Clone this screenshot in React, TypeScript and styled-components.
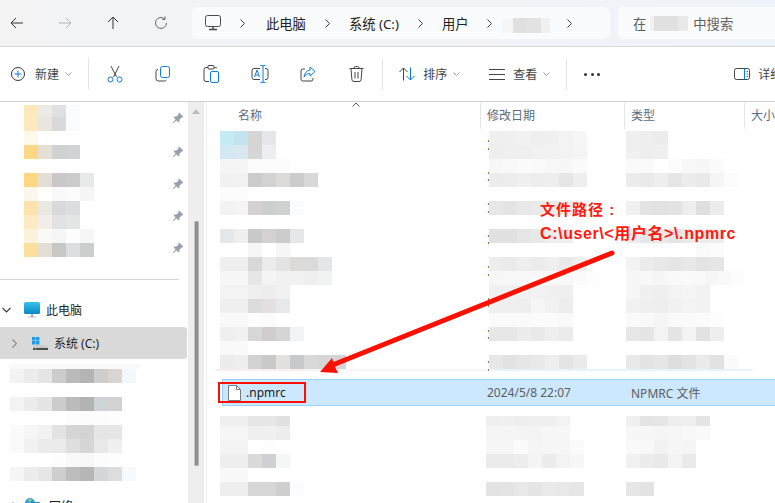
import styled, { createGlobalStyle } from 'styled-components'

const GlobalStyle = createGlobalStyle`
  html, body {
    margin: 0;
    padding: 0;
    background: #fff;
  }

  body {
    font-family: "Noto Sans", "Noto Sans CJK SC", sans-serif;
    font-size: 12px;
    color: #1f1f1f;
  }
`

// 马赛克数据: 两位是灰度, 六位是彩色, -- 是透明
const sideQuick = [
  'FDE9B9 ECEAE4 E0 FBFCFF',
  'FDE9BB E8E6DF D9 FBFCFF',
  'FFF9EC',
  'FDD884 E5E0D4 D1 D1D2D3',
  '',
  'FDD880 E4DFD5 C9C8C6 CB E8EAEA',
  'FCF7EC FF F9 FC F5',
  'FDE3AB E9E8E2 D9 DCDDDF',
  'FCEBC3 F0EEE7 E2 E3E4E4',
  'FCF1D9 F9F9F7 F6 FD F6',
  'FDDF9C E3DFD7 C8C7C5 DDDEE0 CCCDCD',
]

const sideDrives = [
  'F3 EC E5 CC BA B4 CE D8D5D3 F5F8FA',
  '',
  'F3 EC E5 CC BB B3 CED3D6 D2',
  '-- -- -- -- FD FC FC FD',
  'FA F6 F2 E3 D5 D3 E6 E6',
  'FA F1 EB EB DE D6 E8 F0',
  '-- -- -- FD F9 F8 FC FD',
  'F5 EC E6 CE BD B6 D4D6D8 DD F8F9FC',
]

const nameUpper = [
  'C3ECF5 C3E3EF D6 E6E7E9',
  'D2E8F3 D9E8F0 D6 EDEEF0',
  'F5 F5 FC FC FC FE',
  'F1 F2 CB D3 DCDBD9 CB D8',
  'FC FC',
  'F2 F5 D3D2D0 CCCFCE D0D2D1 FAFBFC',
  '',
  'E6E7E9 EF C9 D4D2D0 CC E6E7E9',
  '-- -- F6 -- F6',
  'EF EF D8 EB E3 DCDAD8 DA E5E6E8',
  'F6 F6 E6 F4 F1 F1 EF F1F3F3',
  'F3 F3 EF ED F1',
  'F0 F0 DC E2E0E0 E7E8E9',
  'F9 F9 FD FB',
  'EF F1 D7 CFCDCD D5 F2F3F5',
  'F9 F9',
  'EC EE D2 C9 E2E1DF C8C9CB D9 D6 D4',
]

const dateUpper = [
  'EF F0 F1 EF F0 F3 F6',
  'EE EF EF F1 F2 F3 F5',
  'F7 F9 FB FA F8 F7 FB',
  'EC ED EF ED EE E6 EE',
  '',
  'E7 E4 E9 EA EC ED F0',
  '',
  'E1 E1 E6 E8 EE EE',
  '',
  'ED EA EE EB EF E9 EE',
  'F7 F8 F8 F9 F8 F8 FB FD',
  'F1 F1 F1 F2 F0 EF',
  'EF EF EE F6 F1 ED FE',
  'FA FA FA FB FB F9',
  'E7 E7 EC E9 EF EB',
  '',
  'E7 E2 E6 E8 EE E4 EA',
]

const typeUpper = [
  'F0 EE EC',
  'F0 EE EF',
  'FA FA FF FC F8 F7 FB',
  'EC EA EE E6 EC E9 F5 FC',
  '',
  'F0 E4 E2 E3 EE DF EC',
  '',
  'EC E7 E9 E5 EA EC EE',
  '-- -- -- -- -- FA FC',
  'F3 EC E8 E5 E8 E4 E6',
  'F7 F8 F5 F9 FA F9 F6 F9 FC',
  'F7 F0 EF F3 F5 F2',
  'F1 EF EE F1 F3 F2',
  'FA F9 F5 FA FA FB FD',
  'E7 E5 F3 E5 F3 E2 EE',
  '',
  'E9 E3 E6 DE E3 EA E2 FA',
]

const nameLower = [
  'F0 F0 E6 E6 E1',
  'F6 F6 EF F0 ED',
  'F3 F3 FF FD',
  'EE EE DA D0D0D3 F5F7F6',
  'F8 F8',
  'EE EE D7 D7 CF FCFCFE',
]

const dateLower = [
  'EF F0 EE EF EF F3',
  'F5 F5 F4 F3 F6 F7',
  'F7 F7 FB F5 F7 F6 FB',
  'EB EB ED F4 EC F3 F7',
  '',
  'E3 E4 E8 E5 EA E8 E6',
]

const typeLower = [
  'EF E4 E6 EE EF E5',
  'F7 F7 F5 F6 F8 F9',
  'F9 F8 F2 F6 F5',
  'F1 EC E9 F3 EA',
  '',
  'E6 E3',
]

const toColor = (token: string) => {
  if (token === '--') return 'transparent'
  return token.length === 2 ? `#${token}${token}${token}` : `#${token}`
}

const Mosaic = ({ rows, topRow = 14 }: { rows: string[]; topRow?: number }) => (
  <MosaicGrid>
    {rows.map((row, r) => (
      <MosaicRow key={r} style={{ height: r === 0 ? topRow : 14 }}>
        {row
          .split(' ')
          .filter(Boolean)
          .map((token, c) => (
            <MosaicCell key={c} style={{ background: toColor(token) }} />
          ))}
      </MosaicRow>
    ))}
  </MosaicGrid>
)

const Chevron = () => (
  <svg width="5" height="9" viewBox="0 0 5 9" fill="none" stroke="#3a3a3a" strokeWidth="1">
    <path d="M.5.5l4 4-4 4" />
  </svg>
)

const SmallDown = () => (
  <svg width="7" height="4" viewBox="0 0 7 4" fill="none" stroke="#9a9a9a" strokeWidth="1">
    <path d="M.5.5l3 3 3-3" />
  </svg>
)

const BLUE = '#0f7ad8'
const INK = '#444'

const Pin = () => (
  <svg width="12" height="12" viewBox="0 0 12 12" fill="#97a1ab">
    <path d="M7.2.6l4.2 4.2-1 .8-.8-.2-2.2 2.3.1 1.9-.9.8-2-2L1 11.500.6 11l3-3.600-2-2 .8-.9 1.900.1L6.600 2.400l-.2-.8z" />
  </svg>
)

export default function App() {
  return (
    <Page>
      <GlobalStyle />
      <TopBar>
        <NavIcons>
          <svg width="16" height="16" viewBox="0 0 16 16" fill="none" stroke="#333">
            <path d="M14 8H2.500M7 3L2 8l5 5" />
          </svg>
          <svg width="16" height="16" viewBox="0 0 16 16" fill="none" stroke="#b4b4b4">
            <path d="M2 8h11.500M9 3l5 5-5 5" />
          </svg>
          <svg width="16" height="16" viewBox="0 0 16 16" fill="none" stroke="#333">
            <path d="M8 14V2.500M3 7l5-5 5 5" />
          </svg>
          <svg width="16" height="16" viewBox="0 0 16 16" fill="none" stroke="#666">
            <path d="M13.500 8a5.500 5.500 0 1 1-1.800-4.100M12 1.500V4.400H9.100" />
          </svg>
        </NavIcons>
        <AddressBar>
          <svg width="16" height="16" viewBox="0 0 16 16" fill="none" stroke="#4a4a4a">
            <rect x=".5" y=".5" width="15" height="11" rx="2" />
            <path d="M8 12v2.500M4 14.500h8" strokeWidth="1.500" />
          </svg>
          <Chevron />
          <FirstCrumb>此电脑</FirstCrumb>
          <Chevron />
          <Crumb>系统 (C:)</Crumb>
          <Chevron />
          <Crumb>用户</Crumb>
          <Chevron />
          <BlurredFolder />
          <Chevron />
        </AddressBar>
        <SearchBox>
          <SearchText>在</SearchText>
          <BlurredScope />
          <SearchText>中搜索</SearchText>
        </SearchBox>
      </TopBar>

      <Toolbar>
        <NewButton>
          <svg width="14" height="14" viewBox="0 0 14 14" fill="none">
            <circle cx="7" cy="7" r="6.500" stroke="#333" />
            <path d="M7 3.500v7M3.500 7h7" stroke={BLUE} />
          </svg>
          <ToolLabel>新建</ToolLabel>
          <SmallDown />
        </NewButton>
        <ToolSep />
        <ClipboardGroup>
          <IconButton>
            <svg width="16" height="18" viewBox="0 0 16 18" fill="none" stroke={INK}>
              <path d="M4 1l5.500 11M12 1L6.500 12" />
              <circle cx="3.500" cy="14.500" r="2.500" stroke={BLUE} />
              <circle cx="12.500" cy="14.500" r="2.500" stroke={BLUE} />
            </svg>
          </IconButton>
          <IconButton>
            <svg width="16" height="16" viewBox="0 0 16 16" fill="none">
              <path d="M3 3.500A2 2 0 0 0 1 5.500v7A2.500 2.500 0 0 0 3.500 15h6a2 2 0 0 0 1.800-1.200" stroke={INK} />
              <rect x="5.500" y=".5" width="9" height="11" rx="2" stroke={BLUE} />
            </svg>
          </IconButton>
          <IconButton>
            <svg width="16" height="18" viewBox="0 0 16 18" fill="none">
              <path d="M5 2.500H3A2 2 0 0 0 1 4.500v10A2 2 0 0 0 3 16.500h3M11 2.500h1.500a2 2 0 0 1 1.500.8" stroke={INK} />
              <rect x="5" y=".5" width="6" height="3.500" rx="1" stroke={INK} />
              <rect x="7.500" y="6.500" width="8" height="11" rx="1.500" stroke={BLUE} />
            </svg>
          </IconButton>
          <IconButton>
            <svg width="18" height="18" viewBox="0 0 18 18" fill="none">
              <path d="M9 3.500H3A2 2 0 0 0 1 5.500v7a2 2 0 0 0 2 2h6M14 3.500h1A2 2 0 0 1 17 5.500v7a2 2 0 0 1-2 2h-1" stroke={INK} />
              <path d="M9.500.5h1.500a1 1 0 0 1 1 1v15a1 1 0 0 1-1 1H9.500M14.500.5H13a1 1 0 0 0-1 1M14.500 17.500H13a1 1 0 0 1-1-1" stroke={BLUE} />
              <path d="M3.500 12l2.500-7 2.500 7M4.400 10h3.200" stroke={BLUE} />
            </svg>
          </IconButton>
          <IconButton>
            <svg width="16" height="16" viewBox="0 0 16 16" fill="none">
              <path d="M5 3H3A2 2 0 0 0 1 5v8a2 2 0 0 0 2 2h8a2 2 0 0 0 2-2v-1" stroke={INK} />
              <path d="M10 1l5 4.500-5 4.500V7.500C7.500 7.500 5.500 8.500 4 11c.3-3.500 2.500-6.500 6-7z" stroke={BLUE} />
            </svg>
          </IconButton>
          <IconButton>
            <svg width="15" height="16" viewBox="0 0 15 16" fill="none" stroke={INK}>
              <path d="M.5 2.500h14M5 2.500V2a1.500 1.500 0 0 1 1.500-1.500h2A1.500 1.500 0 0 1 10 2v.5M2 2.500l.9 11A2 2 0 0 0 5 15.500h5a2 2 0 0 0 2.100-2l.9-11M6 6v6.500M9 6v6.500" />
            </svg>
          </IconButton>
        </ClipboardGroup>
        <ToolSep />
        <SortButton>
          <svg width="16" height="14" viewBox="0 0 16 14" fill="none">
            <path d="M4.500 13.500V1M.5 5l4-4 4 4" stroke={INK} />
            <path d="M11.500.5V13M7.500 9l4 4 4-4" stroke={BLUE} />
          </svg>
          <ToolLabel>排序</ToolLabel>
          <SmallDown />
        </SortButton>
        <ViewButton>
          <svg width="16" height="11" viewBox="0 0 16 11" fill="none" stroke={INK}>
            <path d="M0 .5h16M0 5.500h16M0 10.500h16" />
          </svg>
          <ToolLabel>查看</ToolLabel>
          <SmallDown />
        </ViewButton>
        <ToolSep />
        <MoreDots>
          <i />
          <i />
          <i />
        </MoreDots>
        <DetailsButton>
          <svg width="16" height="12" viewBox="0 0 16 12" fill="none">
            <rect x=".5" y=".5" width="15" height="11" rx="2" stroke={INK} />
            <path d="M10.500.5V11.500M12.500 3.500h1.500M12.500 6h1.500M12.500 8.500h1.500" stroke={BLUE} />
          </svg>
          <ToolLabel>详细信息</ToolLabel>
        </DetailsButton>
      </Toolbar>

      <Main>
        <Sidebar>
          <SideContent>
            <QuickAccess>
              <Mosaic rows={sideQuick} topRow={12} />
              <Pins>
                {[0, 1, 2, 3, 4].map(n => (
                  <Pin key={n} />
                ))}
              </Pins>
            </QuickAccess>
            <SideSep />
            <PcRow>
              <svg width="9" height="6" viewBox="0 0 9 6" fill="none" stroke="#333" strokeWidth="1.200">
                <path d="M.5.800l4 4 4-4" />
              </svg>
              <svg width="16" height="16" viewBox="0 0 16 16">
                <defs>
                  <linearGradient id="pcScreen" x1="0" y1="0" x2="0" y2="1">
                    <stop offset="0" stopColor="#35c3e8" />
                    <stop offset="1" stopColor="#0a86c8" />
                  </linearGradient>
                </defs>
                <rect x="0" y="0" width="16" height="12" rx="1.500" fill="url(#pcScreen)" />
                <path d="M7 12h2v2.500H7zM4.500 14.500h7v1h-7z" fill="#a9b4bb" />
              </svg>
              <SideLabel>此电脑</SideLabel>
            </PcRow>
            <DriveRow>
              <svg width="5" height="9" viewBox="0 0 5 9" fill="none" stroke="#8a8a8a" strokeWidth="1.200">
                <path d="M.5.500l4 4-4 4" />
              </svg>
              <svg width="16" height="13" viewBox="0 0 16 13">
                <path d="M0 0h3.400v3.400H0zM4 0h3.400v3.400H4zM0 4h3.400v3.400H0zM4 4h3.400v3.400H4z" fill="#1b9be8" />
                <path d="M1 10l1-1.500h12L16 10v3H1z" fill="#c8c8c8" />
                <path d="M1 11h15v2H1z" fill="#4c4c4c" />
                <path d="M3 11.500h1.500v1H3z" fill="#3ddc4b" />
              </svg>
              <DriveLabel>系统 (C:)</DriveLabel>
            </DriveRow>
            <DriveEdge />
            <DriveMosaic>
              <Mosaic rows={sideDrives} />
            </DriveMosaic>
            <NetworkRow>
              <svg width="5" height="9" viewBox="0 0 5 9" fill="none" stroke="#8a8a8a" strokeWidth="1.200">
                <path d="M.5.500l4 4-4 4" />
              </svg>
              <svg width="16" height="16" viewBox="0 0 16 16">
                <circle cx="6" cy="5" r="5" fill="#3f9fdc" />
                <path d="M4 1h4L6 5zM3 6h3v3z" fill="#8fd07a" />
                <rect x="6" y="4" width="10" height="8" rx="1" fill="#1c8fd0" />
              </svg>
              <SideLabel>网络</SideLabel>
            </NetworkRow>
          </SideContent>
          <ScrollTrack>
            <ScrollUp />
            <ScrollThumb />
          </ScrollTrack>
        </Sidebar>

        <Content>
          <ColumnHeader>
            <NameHead>
              名称
              <SortCaret viewBox="0 0 8 5" fill="none" stroke="#555">
                <path d="M.5 4.500L4 1l3.500 3.500" />
              </SortCaret>
            </NameHead>
            <HeadCell>修改日期</HeadCell>
            <HeadCell>类型</HeadCell>
            <HeadCell>大小</HeadCell>
          </ColumnHeader>

          <ListBlock>
            <NameCell>
              <Mosaic rows={nameUpper} />
            </NameCell>
            <DateCell>
              <DateStub>
                {[0, 1, 2, 3, 4, 5, 6, 7].map(n => (
                  <DateTick key={n} />
                ))}
              </DateStub>
              <Mosaic rows={dateUpper} />
            </DateCell>
            <TypeCell>
              <Mosaic rows={typeUpper} />
            </TypeCell>
          </ListBlock>
          <BlockEdge />

          <SelectedRow>
            <SelectedName>
              <svg width="13" height="16" viewBox="0 0 13 16" fill="#fff" stroke="#7a7a7a">
                <path d="M.5.500h8l4 4v11H.500z" />
                <path d="M8.500.5v4h4" fill="none" />
              </svg>
              .npmrc
            </SelectedName>
            <SelectedText>2024/5/8 22:07</SelectedText>
            <SelectedText>NPMRC 文件</SelectedText>
          </SelectedRow>

          <LowerBlock>
            <NameCell>
              <Mosaic rows={nameLower} topRow={10} />
            </NameCell>
            <LowerDateCell>
              <Mosaic rows={dateLower} topRow={10} />
            </LowerDateCell>
            <TypeCell>
              <Mosaic rows={typeLower} topRow={10} />
            </TypeCell>
          </LowerBlock>
        </Content>
      </Main>

      <RedBox />
      <Note>
        <NoteTitle>文件路径 :</NoteTitle>
        <NotePath>{'C:\\user\\<用户名>\\.npmrc'}</NotePath>
      </Note>
      <ArrowLayer viewBox="0 0 775 503">
        <path d="M612 253L330 366" stroke="#ff0f00" strokeWidth="5" strokeLinecap="round" fill="none" />
        <path d="M320 372L332 358L334 365L338 373z" fill="#ff0f00" />
      </ArrowLayer>
    </Page>
  )
}

const Page = styled.div`
  position: relative;
  display: flex;
  flex-direction: column;
  width: 775px;
  height: 503px;
  overflow: hidden;
  background: #fff;
`

const MosaicGrid = styled.div`
  display: flex;
  flex-direction: column;
`

const MosaicRow = styled.div`
  display: flex;
`

const MosaicCell = styled.i`
  display: block;
  width: 14px;
  height: 100%;
`

const TopBar = styled.header`
  display: flex;
  align-items: center;
  flex: none;
  height: 46px;
  border-bottom: 1px solid #d8d8d8;
  background: linear-gradient(90deg, #f3f3f4, #f1f3f7 60%, #eef3f9);
`

const NavIcons = styled.nav`
  display: flex;
  gap: 32px;
  padding-left: 9px;
`

const AddressBar = styled.div`
  display: flex;
  align-items: center;
  gap: 19px;
  width: 418px;
  height: 32px;
  margin-left: 23px;
  padding-left: 13px;
  box-sizing: border-box;
  border-radius: 6px;
  background: #fafbfd;
`

const Crumb = styled.span`
  font-size: 13.3px;
  color: #222;
  white-space: nowrap;
`

const FirstCrumb = styled(Crumb)`
  margin-left: 2px;
`

const BlurredFolder = styled.div`
  flex: none;
  width: 48px;
  height: 15px;
  margin: 4px -2px 0 -9px;
  background: linear-gradient(90deg, #f6f6f6 0 11px, #e0e0e0 11px 25px, #e2e2e2 25px 39px, #f0f0f0 39px);
`

const SearchBox = styled.div`
  display: flex;
  align-items: center;
  flex: 1;
  height: 32px;
  margin-left: 8px;
  padding-left: 15px;
  border-radius: 6px 0 0 6px;
  background: #fafbfd;
`

const SearchText = styled.span`
  font-size: 13.3px;
  color: #5e5e5e;
`

const BlurredScope = styled.div`
  width: 38px;
  height: 15px;
  margin: 0 5px 0 4px;
  background: linear-gradient(90deg, #f1f1f1 0 4px, #e0e0e0 4px 28px, #e8e8e8 28px);
`

const Toolbar = styled.div`
  display: flex;
  align-items: center;
  flex: none;
  height: 54px;
  padding-left: 11px;
  border-bottom: 1px solid #cfcfcf;
  background: #fff;
`

const ToolLabel = styled.span`
  flex: none;
  color: #444;
  white-space: nowrap;
`

const ToolSep = styled.div`
  flex: none;
  width: 1px;
  height: 32px;
  background: #e4e4e4;
`

const NewButton = styled.div`
  display: flex;
  align-items: center;
  flex: none;
  width: 77px;
  gap: 10px;

  svg:last-child {
    margin-left: -4px;
  }
`

const ClipboardGroup = styled.div`
  display: flex;
  flex: none;
  margin: 0 2px;
`

const IconButton = styled.div`
  display: flex;
  align-items: center;
  justify-content: center;
  flex: none;
  width: 48.2px;
  height: 24px;
`

const SortButton = styled.div`
  display: flex;
  align-items: center;
  flex: none;
  gap: 8px;
  margin-left: 16px;
  width: 90px;

  svg:last-child {
    margin-left: -2px;
  }
`

const ViewButton = styled(SortButton)`
  margin-left: 0;
  width: 77px;
`

const MoreDots = styled.div`
  display: flex;
  flex: none;
  gap: 3.5px;
  margin-left: 17px;

  i {
    display: block;
    width: 3px;
    height: 3px;
    border-radius: 50%;
    background: #333;
  }
`

const DetailsButton = styled.div`
  display: flex;
  align-items: center;
  flex: none;
  gap: 8px;
  margin-left: 134px;
`

const Main = styled.main`
  display: flex;
  flex: 1;
  min-height: 0;
  overflow: hidden;
`

const Sidebar = styled.aside`
  display: flex;
  flex: none;
  width: 206px;
  border-right: 1px solid #f0f0f0;
`

const SideContent = styled.div`
  flex: none;
  width: 188px;
  padding-top: 3px;
  box-sizing: border-box;
`

const QuickAccess = styled.div`
  display: flex;
  justify-content: space-between;
  width: 184px;
  padding-left: 24px;
  box-sizing: border-box;
`

const Pins = styled.div`
  display: flex;
  flex-direction: column;
  gap: 20px;
  padding-top: 7px;

  svg:first-child {
    margin-bottom: 2px;
  }
`

const SideSep = styled.div`
  width: 179px;
  height: 1px;
  margin-top: 22px;
  background: #d4d4d4;
`

const PcRow = styled.div`
  display: flex;
  align-items: center;
  gap: 9px;
  height: 24px;
  margin-top: 18px;
  padding-left: 2px;
  box-sizing: border-box;

  svg:nth-of-type(2) {
    margin-left: 4px;
  }
`

const SideLabel = styled.span`
  margin-left: -3px;
  color: #1f1f1f;
  white-space: nowrap;
`

const DriveRow = styled.div`
  display: flex;
  align-items: center;
  width: 187px;
  height: 32px;
  margin-top: 5px;
  padding-left: 12px;
  box-sizing: border-box;
  border-radius: 0 3px 3px 0;
  background: #d9d9d9;

  svg:nth-of-type(2) {
    margin-left: 15px;
  }
`

const DriveLabel = styled.span`
  margin-left: 6px;
  color: #1f1f1f;
  white-space: nowrap;
`

const DriveEdge = styled.div`
  width: 132px;
  height: 5px;
  margin: 5px 0 0 9px;
  background: #f9f9f9;
`

const DriveMosaic = styled.div`
  padding-left: 10px;
`

const NetworkRow = styled.div`
  display: flex;
  align-items: center;
  gap: 5px;
  height: 24px;
  margin-top: 13px;
  padding-left: 12px;
  box-sizing: border-box;

  svg:nth-of-type(2) {
    margin-left: 2px;
  }

  span {
    margin-left: 4px;
  }
`

const ScrollTrack = styled.div`
  display: flex;
  flex-direction: column;
  align-items: center;
  flex: none;
  width: 16px;
  background: #eeeeee;
`

const ScrollUp = styled.div`
  width: 0;
  height: 0;
  margin-top: 7px;
  border-right: 4px solid transparent;
  border-left: 4px solid transparent;
  border-bottom: 5px solid #bdbdbd;
`

const ScrollThumb = styled.div`
  width: 5px;
  height: 245px;
  margin-top: 107px;
  border-radius: 3px;
  background: #8d8d8d;
  box-shadow: inset 1px 0 #c4c4c4, inset -1px 0 #b5b5b5;
`

const Content = styled.section`
  flex: 1;
  min-width: 0;
`

const ColumnHeader = styled.div`
  display: grid;
  grid-template-columns: 273px 144px 120px 1fr;
  height: 27px;
`

const HeadCell = styled.div`
  display: flex;
  align-items: center;
  padding: 0 0 2px 6px;
  border-left: 1px solid #e5e5e5;
  color: #5c6b7c;
  white-space: nowrap;
`

const NameHead = styled.div`
  position: relative;
  display: flex;
  align-items: center;
  padding: 0 0 2px 31px;
  color: #5c6b7c;
`

const SortCaret = styled.svg`
  position: absolute;
  top: 0;
  left: 145px;
  width: 8px;
  height: 5px;
`

const ListBlock = styled.div`
  display: grid;
  grid-template-columns: 273px 144px 120px;
  margin-top: 2px;
  height: 238px;
`

const NameCell = styled.div`
  padding-left: 13px;
`

const DateCell = styled.div`
  display: flex;
  padding-left: 8px;
`

const DateStub = styled.div`
  display: flex;
  flex-direction: column;
  flex: none;
  width: 1px;
  padding-top: 9px;
`

const DateTick = styled.i`
  display: flex;
  flex-direction: column;
  flex: none;
  gap: 5.5px;
  height: 31.6px;

  &::before,
  &::after {
    content: "";
    width: 1px;
    height: 2px;
    background: #a8703c;
  }
`

const TypeCell = styled.div`
  padding-left: 2px;
`

const BlockEdge = styled.div`
  width: 538px;
  height: 2px;
  margin-left: 8px;
  background: linear-gradient(90deg, #fbeeee 0 90px, #f4f7fa 90px 275px, #e9f3fb 275px);
`

const SelectedRow = styled.div`
  display: grid;
  grid-template-columns: 257px 144px 1fr;
  align-items: center;
  height: 27px;
  margin: 8px 0 0 15px;
  box-sizing: border-box;
  border: 1px solid #99d1ff;
  border-right: 0;
  background: #cce8ff;
`

const SelectedName = styled.div`
  display: flex;
  align-items: center;
  gap: 5px;
  padding-left: 5px;
  color: #1a1a1a;
`

const SelectedText = styled.div`
  padding-left: 7px;
  color: #5d5d5d;
  white-space: nowrap;
`

const LowerBlock = styled(ListBlock)`
  height: auto;
  margin-top: 10px;
`

const LowerDateCell = styled.div`
  padding-left: 6px;
`

const RedBox = styled.div`
  position: absolute;
  top: 382px;
  left: 218px;
  width: 84px;
  height: 17px;
  border: 2px solid #ff0f00;
`

const Note = styled.div`
  position: absolute;
  top: 198px;
  left: 540px;
  color: #ff1a0f;
  font-family: "Liberation Sans", "Noto Sans CJK SC", sans-serif;
  font-size: 16px;
  font-weight: 700;
`

const NoteTitle = styled.div`
  height: 24px;
  font-size: 15px;
  line-height: 24px;
  letter-spacing: 1px;
  white-space: nowrap;
`

const NotePath = styled.div`
  height: 24px;
  line-height: 24px;
  letter-spacing: 0.6px;
  white-space: nowrap;
`

const ArrowLayer = styled.svg`
  position: absolute;
  top: 0;
  left: 0;
  width: 775px;
  height: 503px;
  pointer-events: none;
`
